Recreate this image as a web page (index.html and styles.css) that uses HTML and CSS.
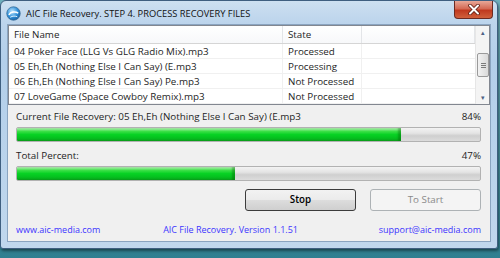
FILE: index.html
```html
<!DOCTYPE html>
<html lang="en">
<head>
  <meta charset="UTF-8">
  <title>AIC File Recovery</title>
  <link rel="stylesheet" href="styles.css">
</head>
<body>
  <div class="window">
    <!-- title bar -->
    <div class="titlebar">
      <svg class="app-icon" width="15" height="15" viewBox="0 0 16 16">
        <defs>
          <radialGradient id="g1" cx="0.4" cy="0.35" r="0.7">
            <stop offset="0" stop-color="#bfe6ff"/>
            <stop offset="0.6" stop-color="#2f8fd8"/>
            <stop offset="1" stop-color="#155a9c"/>
          </radialGradient>
        </defs>
        <circle cx="8" cy="8" r="7.2" fill="url(#g1)" stroke="#3a6d98" stroke-width="0.8"/>
        <path d="M3 9.5 C5 6 10 5.5 13 7.5" stroke="#fff" stroke-width="1.6" fill="none"/>
        <path d="M4.5 12 C7 10.5 10 10.5 12 11.5" stroke="#e8f6ff" stroke-width="1" fill="none"/>
      </svg>
      <span class="title">AIC File Recovery. STEP 4. PROCESS RECOVERY FILES</span>
      <div class="close-btn">
        <svg width="14" height="11" viewBox="0 0 14 11">
          <path d="M3 1.5 L11 9.5 M11 1.5 L3 9.5" stroke="#5a1a10" stroke-width="3.6" stroke-linecap="round"/>
          <path d="M3 1.5 L11 9.5 M11 1.5 L3 9.5" stroke="#fff" stroke-width="2" stroke-linecap="round"/>
        </svg>
      </div>
    </div>

    <div class="client">
      <!-- file list -->
      <div class="listview">
        <div class="list-body">
          <div class="row header">
            <div class="cell col-name">File Name</div>
            <div class="cell col-state">State</div>
            <div class="cell col-rest"></div>
          </div>
          <div class="row">
            <div class="cell col-name">04 Poker Face (LLG Vs GLG Radio Mix).mp3</div>
            <div class="cell col-state">Processed</div>
            <div class="cell col-rest"></div>
          </div>
          <div class="row">
            <div class="cell col-name">05 Eh,Eh (Nothing Else I Can Say) (E.mp3</div>
            <div class="cell col-state">Processing</div>
            <div class="cell col-rest"></div>
          </div>
          <div class="row">
            <div class="cell col-name">06 Eh,Eh (Nothing Else I Can Say) Pe.mp3</div>
            <div class="cell col-state">Not Processed</div>
            <div class="cell col-rest"></div>
          </div>
          <div class="row">
            <div class="cell col-name">07 LoveGame (Space Cowboy Remix).mp3</div>
            <div class="cell col-state">Not Processed</div>
            <div class="cell col-rest"></div>
          </div>
        </div>
        <div class="scrollbar">
          <div class="arrow">&#9652;</div>
          <div class="track">
            <div class="thumb"><span></span><span></span><span></span></div>
          </div>
          <div class="arrow">&#9662;</div>
        </div>
      </div>

      <div class="content">
        <div class="label-row">
          <span>Current File Recovery: 05 Eh,Eh (Nothing Else I Can Say) (E.mp3</span>
          <span>84%</span>
        </div>
        <div class="progress"><div class="fill" style="width: 83%"></div></div>

        <div class="label-row">
          <span>Total Percent:</span>
          <span>47%</span>
        </div>
        <div class="progress"><div class="fill" style="width: 47%"></div></div>

        <div class="buttons">
          <div class="btn btn-default">Stop</div>
          <div class="btn btn-disabled">To Start</div>
        </div>

        <div class="footer">
          <span>www.aic-media.com</span>
          <span class="version">AIC File Recovery. Version 1.1.51</span>
          <span>support@aic-media.com</span>
        </div>
      </div>
    </div>
  </div>
</body>
</html>
```

FILE: styles.css
```css
body {
  margin: 0;
  width: 500px;
  height: 258px;
  overflow: hidden;
  font-family: "Open Sans", "Noto Sans", sans-serif;
  font-size: 9.8px;
  color: #1e1e1e;
  background: linear-gradient(#6fb0bd, #2f7f90);
}

.window {
  width: 496px;
  height: 247px;
  border: 1px solid #3f5f80;
  border-radius: 6px 6px 3px 3px;
  background: linear-gradient(180deg, #cde0f1 0px, #bcd4ec 22px, #b3cfea 60px, #c0d7ed 247px);
  display: flex;
  flex-direction: column;
  box-shadow: 1px 2px 3px rgba(0, 0, 0, 0.45);
}

.titlebar {
  height: 23px;
  display: flex;
  align-items: center;
  padding-left: 5px;
  flex-shrink: 0;
}

.app-icon {
  margin-right: 5px;
  margin-top: 2px;
}

.title {
  color: #111;
  font-size: 9.3px;
  margin-top: 2px;
}

.close-btn {
  margin-left: auto;
  margin-right: 4px;
  align-self: flex-start;
  width: 37px;
  height: 17px;
  border: 1px solid #6c2a22;
  border-top: none;
  border-radius: 0 0 4px 4px;
  background: linear-gradient(#e8a898 0%, #d46a55 45%, #c0391f 55%, #d0603c 100%);
  display: flex;
  align-items: center;
  justify-content: center;
}

.client {
  flex: 1;
  margin: 0 6px 6px 6px;
  background: #f0f0f0;
  border: 1px solid #8aa4c0;
  display: flex;
  flex-direction: column;
}

.listview {
  height: 78px;
  background: #fff;
  border: 1px solid #828790;
  display: flex;
  overflow: hidden;
}

.list-body {
  flex: 1;
  font-size: 9.8px;
}

.row {
  display: flex;
  height: 14px;
  border-bottom: 1px solid #f0f0f0;
  line-height: 15px;
}

.row.header {
  height: 17px;
  line-height: 17px;
  border-bottom: 1px solid #d5d5d5;
  background: linear-gradient(#fff, #f7f8fa);
}

.cell {
  padding-left: 5px;
  white-space: nowrap;
  overflow: hidden;
  border-right: 1px solid #f0f0f0;
}

.header .cell {
  border-right: 1px solid #e3e5e8;
}

.col-name {
  width: 268px;
}

.col-state {
  width: 73px;
}

.col-rest {
  flex: 1;
  border-right: none;
}

.scrollbar {
  width: 13px;
  background: #f4f4f4;
  border-left: 1px solid #e6e6e6;
  display: flex;
  flex-direction: column;
  align-items: center;
}

.arrow {
  height: 13px;
  font-size: 7px;
  line-height: 13px;
  color: #4d6185;
}

.track {
  flex: 1;
  width: 100%;
  display: flex;
  align-items: center;
}

.thumb {
  width: 11px;
  height: 22px;
  margin-left: 1px;
  border: 1px solid #9a9a9a;
  border-radius: 2px;
  background: linear-gradient(90deg, #f2f2f2, #dadada);
  display: flex;
  flex-direction: column;
  align-items: center;
  justify-content: center;
  gap: 1px;
}

.thumb span {
  width: 5px;
  height: 1px;
  background: #7b7b7b;
}

.content {
  flex: 1;
  padding: 3px 9px 0 8px;
  display: flex;
  flex-direction: column;
}

.label-row {
  display: flex;
  justify-content: space-between;
  height: 18px;
  line-height: 18px;
}

.progress {
  height: 13px;
  margin: 1px 0 5px 0;
  border: 1px solid #b2b2b2;
  border-radius: 2px;
  background: linear-gradient(#f3f3f3 0%, #e4e4e4 40%, #cfcfcf 60%, #dcdcdc 100%);
  overflow: hidden;
}

.fill {
  height: 100%;
  background: linear-gradient(#c0f5c0 0%, #3ee048 25%, #08d224 50%, #05c21f 75%, #0aa51c 100%);
  box-shadow: inset -3px 0 2px rgba(0, 80, 0, 0.35);
}

.buttons {
  display: flex;
  justify-content: flex-end;
  gap: 14px;
  margin-top: 3px;
}

.btn {
  width: 109px;
  height: 20px;
  line-height: 20px;
  text-align: center;
  border: 1px solid #707070;
  border-radius: 3px;
  background: linear-gradient(#f2f2f2 0%, #ebebeb 49%, #dddddd 50%, #cfcfcf 100%);
  color: #1a1a1a;
}

.btn-default {
  font-weight: 600;
  color: #000;
  border-color: #3c3c3c;
}

.btn-disabled {
  background: #f4f4f4;
  border-color: #adb2b5;
  color: #8a8a8a;
}

.footer {
  display: flex;
  justify-content: space-between;
  margin-top: 12px;
  font-size: 9px;
  color: #3d35ff;
}

.footer .version {
  margin-right: 18px;
}
```
